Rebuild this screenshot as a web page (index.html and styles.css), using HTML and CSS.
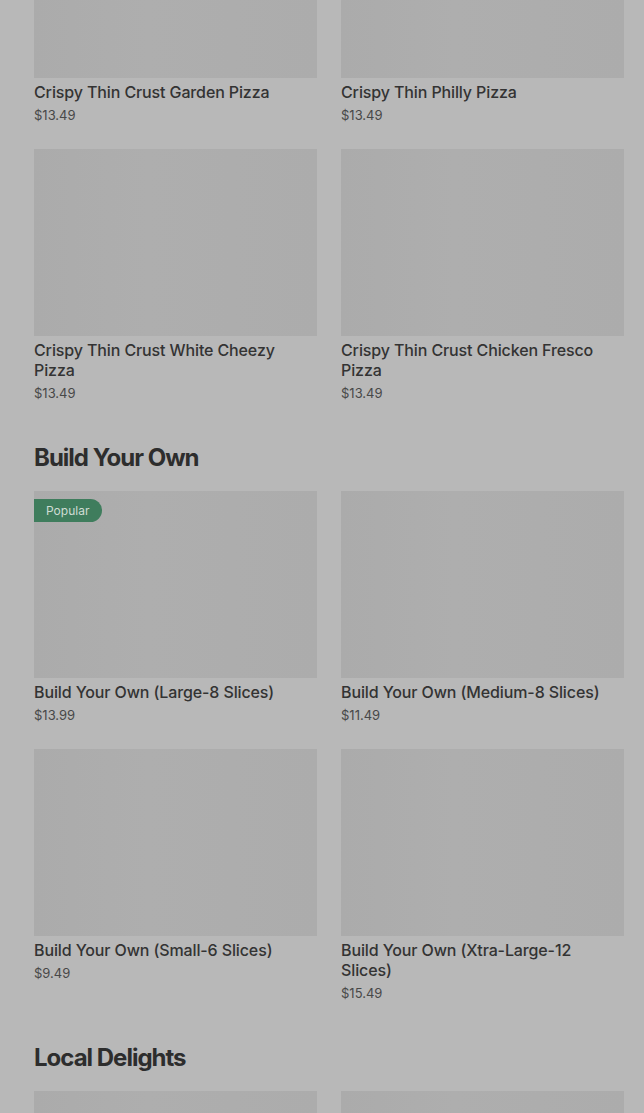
FILE: index.html
```html
<!DOCTYPE html>
<html lang="en">
<head>
<meta charset="utf-8">
<title>Menu</title>
<link rel="stylesheet" href="styles.css">
</head>
<body>
<main class="menu">
  <section class="section first">
    <div class="grid">
      <article class="card"><div class="thumb"></div><h3 class="name">Crispy Thin Crust Garden Pizza</h3><p class="price">$13.49</p></article>
      <article class="card"><div class="thumb"></div><h3 class="name">Crispy Thin Philly Pizza</h3><p class="price">$13.49</p></article>
      <article class="card"><div class="thumb"></div><h3 class="name">Crispy Thin Crust White Cheezy Pizza</h3><p class="price">$13.49</p></article>
      <article class="card"><div class="thumb"></div><h3 class="name">Crispy Thin Crust Chicken Fresco Pizza</h3><p class="price">$13.49</p></article>
    </div>
  </section>
  <section class="section">
    <h2 class="heading">Build Your Own</h2>
    <div class="grid">
      <article class="card"><div class="thumb"><span class="badge">Popular</span></div><h3 class="name">Build Your Own (Large-8 Slices)</h3><p class="price">$13.99</p></article>
      <article class="card"><div class="thumb"></div><h3 class="name">Build Your Own (Medium-8 Slices)</h3><p class="price">$11.49</p></article>
      <article class="card"><div class="thumb"></div><h3 class="name">Build Your Own (Small-6 Slices)</h3><p class="price">$9.49</p></article>
      <article class="card"><div class="thumb"></div><h3 class="name">Build Your Own (Xtra-Large-12 Slices)</h3><p class="price">$15.49</p></article>
    </div>
  </section>
  <section class="section">
    <h2 class="heading">Local Delights</h2>
    <div class="grid">
      <article class="card"><div class="thumb"></div></article>
      <article class="card"><div class="thumb"></div></article>
    </div>
  </section>
</main>
</body>
</html>
```

FILE: styles.css
```css
html, body {
  margin: 0;
  padding: 0;
  background: #b8b8b8;
  overflow: hidden;
}
body {
  font-family: Inter, "Noto Sans", "Liberation Sans", sans-serif;
  color: #333;
}
.menu {
  padding: 0 20px 0 34px;
  margin-top: -109px;
}
.section {
  margin-top: 40px;
}
.section.first {
  margin-top: 0;
}
.heading {
  margin: 0 0 17px;
  font-size: 24px;
  line-height: 32px;
  font-weight: 700;
  letter-spacing: -1px;
  color: #2d2d2d;
}
.grid {
  display: grid;
  grid-template-columns: 283px 283px;
  column-gap: 24px;
  row-gap: 25px;
}
.card {
  display: flex;
  flex-direction: column;
}
.thumb {
  position: relative;
  height: 187px;
  background: linear-gradient(90deg, #ababab 0%, #aeaeae 40%, #acacac 100%);
}
.badge {
  position: absolute;
  left: 0;
  top: 8px;
  height: 23px;
  line-height: 23px;
  padding: 0 13px 0 12px;
  background: #3f7d5d;
  color: #cfdcd4;
  font-size: 12px;
  border-radius: 0 12px 12px 0;
}
.name {
  margin: 4px 0 0;
  font-size: 16px;
  line-height: 20px;
  font-weight: 500;
  letter-spacing: -0.12px;
  color: #333;
}
.price {
  margin: 4px 0 0;
  font-size: 13px;
  line-height: 18px;
  color: #484848;
}
```
